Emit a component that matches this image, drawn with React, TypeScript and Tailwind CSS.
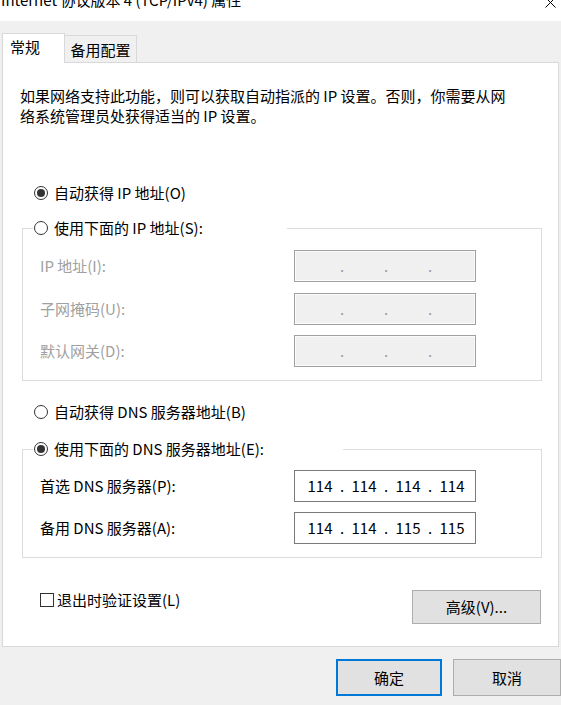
import React from "react";

const FONT = { fontFamily: '"Noto Sans CJK SC", "Noto Sans", sans-serif' };

function Radio({ checked }: { checked?: boolean }) {
  return (
    <span className="w-[14px] h-[14px] rounded-full border border-[#333333] bg-white flex items-center justify-center shrink-0">
      {checked && <span className="w-[8px] h-[8px] rounded-full bg-[#333333]" />}
    </span>
  );
}

function IpBox({ values, disabled }: { values?: string[]; disabled?: boolean }) {
  const segs = values ?? ["", "", "", ""];
  return (
    <div
      className={
        disabled
          ? "w-[182px] h-[32px] border border-[#a0a0a0] bg-[#f0f0f0] shadow-[inset_0_0_0_1px_#fbfbfb] flex items-center pl-[7px] text-[15px] leading-[20px] text-[#9a9aa8]"
          : "w-[182px] h-[32px] border border-[#7a7a7a] bg-white flex items-center pl-[7px] text-[15px] leading-[20px] text-black"
      }
    >
      {segs.map((s, i) => (
        <React.Fragment key={i}>
          <span className="w-[36px] text-center">{s}</span>
          {i < 3 && <span className="w-[8px] text-center">.</span>}
        </React.Fragment>
      ))}
    </div>
  );
}

export default function App() {
  return (
    <div className="w-[561px] h-[705px] bg-[#f0f0f0] overflow-hidden text-black" style={FONT}>
      {/* title bar */}
      <div className="h-[21px] bg-white overflow-hidden flex justify-between">
        <div className="-mt-[10px] pl-[1px] text-[15px] leading-[20px] whitespace-nowrap">
          Internet 协议版本 4 (TCP/IPv4) 属性
        </div>
        <svg className="-mt-[3px] mr-[5px]" width="11" height="11" viewBox="0 0 11 11">
          <path d="M0.5 0.5 L10.5 10.5 M10.5 0.5 L0.5 10.5" stroke="#000" strokeWidth="1" fill="none" />
        </svg>
      </div>

      {/* tabs */}
      <div className="mt-[12px] pl-[2px] flex items-end h-[29px]">
        <div className="relative z-10 h-[30px] -mb-[1px] w-[63px] bg-white border-t border-l border-r border-[#d9d9d9] pl-[7px] pt-[3px] text-[15px] leading-[20px]">
          常规
        </div>
        <div className="h-[27px] w-[72px] bg-[#f0f0f0] border-t border-r border-[#d9d9d9] flex justify-center pt-[4px] text-[15px] leading-[20px]">
          备用配置
        </div>
      </div>

      {/* panel */}
      <div className="ml-[2px] w-[557px] h-[585px] bg-white border border-[#d9d9d9] flex flex-col text-[15px] leading-[20px]">
        <div className="pt-[23px] pl-[17px] whitespace-nowrap">
          如果网络支持此功能，则可以获取自动指派的 IP 设置。否则，你需要从网
          <br />
          络系统管理员处获得适当的 IP 设置。
        </div>

        <div className="mt-[57px] ml-[31px] h-[20px] flex items-center gap-[6px]">
          <Radio checked />
          <span>自动获得 IP 地址(O)</span>
        </div>

        <fieldset className="mt-[15px] ml-[19px] w-[520px] border border-[#dcdcdc] pb-[13px]">
          <legend className="ml-[10px] w-[254px] pl-[1px] h-[20px] flex items-center gap-[6px]">
            <Radio />
            <span>使用下面的 IP 地址(S):</span>
          </legend>
          <div className="flex flex-col gap-[10px] mt-[12px]">
            <div className="flex items-center h-[32px] pl-[17px] text-[#a0a0a0]">
              <span className="w-[254px]">IP 地址(I):</span>
              <IpBox disabled />
            </div>
            <div className="flex items-center h-[32px] pl-[17px] text-[#a0a0a0] mt-px">
              <span className="w-[254px]">子网掩码(U):</span>
              <IpBox disabled />
            </div>
            <div className="flex items-center h-[32px] pl-[17px] text-[#a0a0a0]">
              <span className="w-[254px]">默认网关(D):</span>
              <IpBox disabled />
            </div>
          </div>
        </fieldset>

        <div className="mt-[21px] ml-[31px] h-[20px] flex items-center gap-[6px]">
          <Radio />
          <span>自动获得 DNS 服务器地址(B)</span>
        </div>

        <fieldset className="mt-[17px] ml-[19px] w-[520px] border border-[#dcdcdc] pb-[13px]">
          <legend className="ml-[10px] w-[310px] pl-[1px] h-[20px] flex items-center gap-[6px]">
            <Radio checked />
            <span>使用下面的 DNS 服务器地址(E):</span>
          </legend>
          <div className="flex flex-col gap-[10px] mt-[11px]">
            <div className="flex items-center h-[32px] pl-[17px]">
              <span className="w-[254px]">首选 DNS 服务器(P):</span>
              <IpBox values={["114", "114", "114", "114"]} />
            </div>
            <div className="flex items-center h-[32px] pl-[17px]">
              <span className="w-[254px]">备用 DNS 服务器(A):</span>
              <IpBox values={["114", "114", "115", "115"]} />
            </div>
          </div>
        </fieldset>

        <div className="mt-[32px] flex items-start">
          <div className="ml-[37px] h-[20px] flex items-center gap-[3px]">
            <span className="w-[14px] h-[14px] border border-[#333333] bg-white shrink-0" />
            <span>退出时验证设置(L)</span>
          </div>
          <button className="ml-auto mr-[17px] w-[129px] h-[34px] bg-[#e1e1e1] border border-[#adadad] text-[15px] leading-[20px]">
            高级(V)...
          </button>
        </div>
      </div>

      {/* footer */}
      <div className="mt-[12px] flex text-[15px] leading-[20px]">
        <button className="ml-[336px] w-[108px] h-[37px] bg-[#e1e1e1] border-2 border-[#0078d7]">确定</button>
        <button className="ml-[11px] w-[108px] h-[37px] shrink-0 bg-[#e1e1e1] border border-[#adadad]">取消</button>
      </div>
    </div>
  );
}
